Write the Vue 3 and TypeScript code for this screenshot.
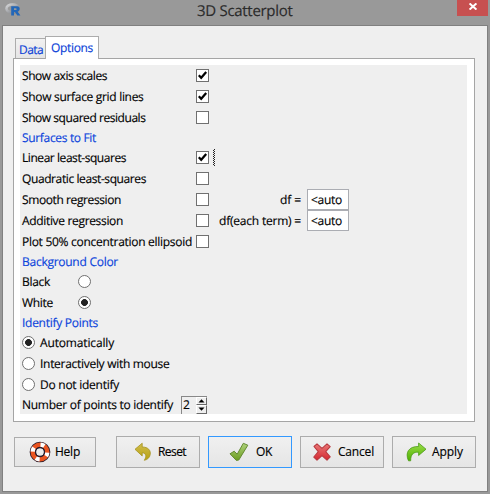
<script setup lang="ts">
interface CheckRow { label: string; width: number; on: boolean; focus?: boolean; df?: string; dfWidth?: number }
interface RadioRow { label: string; width: number; on: boolean }

const displayRows: CheckRow[] = [
  { label: 'Show axis scales', width: 85, on: true },
  { label: 'Show surface grid lines', width: 121.5, on: true },
  { label: 'Show squared residuals', width: 123.5, on: false },
]
const surfaceRows: CheckRow[] = [
  { label: 'Linear least-squares', width: 104, on: true, focus: true },
  { label: 'Quadratic least-squares', width: 124, on: false },
  { label: 'Smooth regression', width: 99, on: false, df: 'df =', dfWidth: 21 },
  { label: 'Additive regression', width: 101, on: false, df: 'df(each term) =', dfWidth: 82 },
  { label: 'Plot 50% concentration ellipsoid', width: 170, on: false },
]
const backgrounds: RadioRow[] = [
  { label: 'Black', width: 28, on: false },
  { label: 'White', width: 31, on: true },
]
const identify: RadioRow[] = [
  { label: 'Automatically', width: 74, on: true },
  { label: 'Interactively with mouse', width: 129.5, on: false },
  { label: 'Do not identify', width: 79, on: false },
]

// Spreads a label's letters so that it fills the given width in pixels.
const vFit = {
  mounted(el: HTMLElement, binding: { value: number }) {
    const count = (el.textContent ?? '').trim().length
    const natural = el.getBoundingClientRect().width
    el.style.letterSpacing = `${((binding.value - natural) / count).toFixed(3)}px`
  },
}
</script>

<template>
  <div class="window">
    <header class="titlebar">
      <svg class="rlogo" width="16" height="14" viewBox="0 0 16 14">
        <defs>
          <linearGradient id="ring" x1="0" y1="0" x2="1" y2="1">
            <stop offset="0" stop-color="#d5d6d8" /><stop offset="1" stop-color="#777a80" />
          </linearGradient>
        </defs>
        <ellipse cx="7.5" cy="5.5" rx="6" ry="4" fill="none" stroke="url(#ring)" stroke-width="2.6" />
        <path d="M6.2 3.2H12.2Q15 3.6 14.6 6.2Q14.3 8 12.6 8.4L15.4 12.6H12.3L10 9H9V12.6H6.2ZM9 5.2V7H11.2Q12.2 6.1 11.2 5.2Z" fill="#2367b8" fill-rule="evenodd" />
      </svg>
      <span v-fit="95.5" class="title">3D Scatterplot</span>
      <button class="close" aria-label="Close">
        <svg width="8" height="7" viewBox="0 0 8 7"><path d="M.6 .4L7.4 6.6M7.4 .4L.6 6.6" stroke="#fff" stroke-width="1.9" /></svg>
      </button>
    </header>
    <main class="client">
      <nav class="tabs">
        <div class="tab"><span v-fit="24">Data</span></div>
        <div class="tab active"><span v-fit="42">Options</span></div>
      </nav>
      <section class="panel">
        <div class="content">
          <div v-for="row in displayRows" :key="row.label" class="row">
            <span class="label"><span v-fit="row.width">{{ row.label }}</span></span>
            <span class="check"><svg v-if="row.on" width="11" height="11" viewBox="0 0 11 11"><path d="M1.8 5.2L4.2 7.8L9.2 2" fill="none" stroke="#000" stroke-width="2.2" /></svg></span>
          </div>
          <div class="row heading"><span v-fit="74">Surfaces to Fit</span></div>
          <div v-for="row in surfaceRows" :key="row.label" class="row">
            <span class="label"><span v-fit="row.width">{{ row.label }}</span></span>
            <span class="check"><svg v-if="row.on" width="11" height="11" viewBox="0 0 11 11"><path d="M1.8 5.2L4.2 7.8L9.2 2" fill="none" stroke="#000" stroke-width="2.2" /></svg></span>
            <span v-if="row.focus" class="focus"></span>
            <template v-if="row.df">
              <span class="df"><span v-fit="row.dfWidth">{{ row.df }}</span></span>
              <span class="entry"><span v-fit="31">&lt;auto</span></span>
            </template>
          </div>
          <div class="row heading"><span v-fit="96">Background Color</span></div>
          <div v-for="row in backgrounds" :key="row.label" class="row">
            <span class="label short"><span v-fit="row.width">{{ row.label }}</span></span>
            <span class="radio" :class="{ on: row.on }"></span>
          </div>
          <div class="row heading"><span v-fit="76">Identify Points</span></div>
          <div v-for="row in identify" :key="row.label" class="row">
            <span class="radio lead" :class="{ on: row.on }"></span>
            <span v-fit="row.width">{{ row.label }}</span>
          </div>
          <div class="row last">
            <span class="count"><span v-fit="151">Number of points to identify</span></span>
            <span class="spin">
              <span class="num">2</span>
              <span class="arrows">
                <i><svg width="7" height="4" viewBox="0 0 7 4"><path d="M.5 3.5L3.5 .2L6.5 3.5Z" /></svg></i>
                <i><svg width="7" height="4" viewBox="0 0 7 4"><path d="M.5 .5L3.5 3.8L6.5 .5Z" /></svg></i>
              </span>
            </span>
          </div>
        </div>
      </section>
      <footer class="buttons">
        <button class="btn help">
          <svg width="22" height="22" viewBox="0 0 24 24">
            <circle cx="12" cy="12" r="7.9" fill="none" stroke="#2a1d2c" stroke-width="6.8" />
            <circle cx="12" cy="12" r="7.9" fill="none" stroke="#ea5420" stroke-width="4.8" />
            <circle cx="12" cy="12" r="7.9" fill="none" stroke="#fff" stroke-width="4.8" stroke-dasharray="4.4 8.01" stroke-dashoffset="2.2" transform="rotate(18 12 12)" />
            <circle cx="12" cy="12" r="4.9" fill="none" stroke="#2a1d2c" stroke-width="1.4" />
          </svg>
          <span v-fit="25">Help</span>
        </button>
        <button class="btn reset">
          <svg width="18" height="20" viewBox="0 0 18 20">
            <defs><linearGradient id="gold" x1="0" y1="0" x2="0" y2="1"><stop offset="0" stop-color="#d1bd4d" /><stop offset="1" stop-color="#b6a00d" /></linearGradient></defs>
            <path d="M8.2 1.2V5C14 5 17 8.4 16.2 12.5C15.7 15.6 13.5 17.7 10.3 18.3C12.6 14.8 12.5 11.3 8.2 10.7V14L1 7.3Z" fill="url(#gold)" stroke="#a4921e" stroke-width=".8" />
          </svg>
          <span v-fit="28">Reset</span>
        </button>
        <button class="btn ok">
          <svg width="20" height="20" viewBox="0 0 20 20">
            <defs><linearGradient id="leaf" x1="0" y1="0" x2="0" y2="1"><stop offset="0" stop-color="#afd27c" /><stop offset="1" stop-color="#6c9d20" /></linearGradient></defs>
            <path d="M1 11.8L5.2 9.2L8.2 12.2L14.3 1.3L18.8 3.2L9.8 18L7.3 18.4Z" fill="url(#leaf)" stroke="#648a32" stroke-width="1" stroke-linejoin="round" />
          </svg>
          <span v-fit="16">OK</span>
        </button>
        <button class="btn cancel">
          <svg width="18" height="18" viewBox="0 0 18 18">
            <defs><linearGradient id="ruby" x1="0" y1="0" x2="0" y2="1"><stop offset="0" stop-color="#e97776" /><stop offset="1" stop-color="#d52830" /></linearGradient></defs>
            <path d="M1 3.5L4 .9L9 5.4L14 .9L17.2 3.7L12.7 8.7L17.2 13.8L14 17.2L9 12.7L4 17.2L.8 14L5.3 8.7Z" fill="url(#ruby)" stroke="#b93a40" stroke-width="1.1" stroke-linejoin="round" />
          </svg>
          <span v-fit="36">Cancel</span>
        </button>
        <button class="btn apply">
          <svg width="21" height="20" viewBox="0 0 21 20">
            <defs><linearGradient id="lime" x1="0" y1="0" x2="0" y2="1"><stop offset="0" stop-color="#9bdd4a" /><stop offset="1" stop-color="#4fb100" /></linearGradient></defs>
            <path d="M12.6 1L20 7.2L12.6 13.5V10.2C7.6 9.8 4.5 12.3 4.7 18.8H2.5C-1.3 10.5 3 4.2 12.6 4.5Z" fill="url(#lime)" stroke="#4b9a18" stroke-width=".8" stroke-linejoin="round" />
          </svg>
          <span v-fit="31">Apply</span>
        </button>
      </footer>
    </main>
  </div>
</template>

<style>
body { margin: 0; }
</style>

<style scoped>
* { box-sizing: border-box; }
.window {
  width: 490px;
  height: 494px;
  display: flex;
  flex-direction: column;
  background: #999;
  color: #000;
  font: 12px/16px "Open Sans", "Noto Sans", sans-serif;
  white-space: nowrap;
  overflow: hidden;
  text-rendering: geometricPrecision;
  -webkit-text-stroke: .15px;
}
.titlebar {
  height: 25px;
  display: grid;
  grid-template-columns: 197px 1fr 31px;
  padding-right: 2px;
  align-items: start;
  flex: none;
}
.rlogo { margin: 3px 0 0 5px; }
.title { justify-self: start; font-size: 15px; line-height: 20px; margin-top: 1px; color: #2b2b2b; }
.close {
  height: 16px;
  padding: 3px 0 0;
  border: 0;
  background: #c75050;
  display: flex;
  justify-content: center;
  align-items: flex-start;
}
.client {
  width: 486px;
  height: 467px;
  margin-left: 2px;
  border: 1px solid #808080;
  background: #efefef;
  padding: 10px 11px 0 10px;
}
.tabs { display: flex; align-items: flex-end; height: 22px; padding-left: 2px; }
.tab {
  width: 30px;
  height: 20px;
  border: 1px solid #acacac;
  border-width: 1px 0 0 1px;
  background: linear-gradient(#f1f1f1, #e5e5e5);
  color: #0b3fd8;
  padding: 3px 0 0 3px;
}
.active { width: 54px; height: 23px; margin-bottom: -1px; border-right-width: 1px; background: #fff; padding-left: 5px; position: relative; }
.panel { width: 462px; height: 364px; border: 1px solid #a5a5a5; background: #fff; padding: 6px; }
.content { width: 447px; height: 349px; background: #efefef; }
.row { display: flex; align-items: center; height: 21px; padding-left: 2px; }
.heading { height: 19px; color: #0b43dc; }
.label { width: 174px; flex: none; }
.short { width: 56px; }
.check { width: 13px; height: 13px; flex: none; border: 1px solid #707070; background: #fff; display: flex; }
.focus {
  width: 2px;
  height: 17px;
  margin-left: 4px;
  background: repeating-conic-gradient(#222 0 25%, #efefef 0 50%) 0 0 / 2px 2px;
}
.df { width: 92px; flex: none; display: flex; justify-content: flex-end; }
.entry { width: 42px; height: 21px; margin-left: 6px; border: 1px solid #abadb3; background: #fff; padding: 2px 0 0 3px; }
.radio { width: 13px; height: 13px; flex: none; border: 1px solid #707070; border-radius: 50%; background: #fff; }
.radio.on { background: radial-gradient(circle, #222 0 3.1px, #fff 3.7px); }
.lead { margin-right: 5px; }
.last { height: 19px; }
.count { width: 159px; flex: none; }
.spin { width: 26px; height: 18px; display: flex; justify-content: space-between; border: 1px solid #888; border-width: 1px 0 0 1px; }
.num { padding-left: 1px; }
.arrows { width: 11px; display: flex; flex-direction: column; }
.arrows i { height: 8px; display: flex; align-items: center; justify-content: center; border: 1px solid; border-color: #fff #696969 #696969 #fff; }
.arrows i + i { height: 9px; }
.arrows svg { flex: none; }
.buttons { display: flex; align-items: center; height: 32px; margin-top: 14px; padding-left: 1px; }
.btn {
  width: 84px;
  height: 32px;
  flex: none;
  display: flex;
  align-items: center;
  margin: 0 8px 0 0;
  padding: 0;
  border: 1px solid #acacac;
  background: linear-gradient(#f0f0f0, #e5e5e5);
  color: #000;
  font: inherit;
  text-align: left;
}
.btn svg, .btn span { flex: none; }
.help { width: 82px; height: 30px; margin-right: 20px; padding-left: 14px; }
.help svg { margin-right: 4px; }
.reset { padding-left: 17px; }
.reset svg { margin-right: 6px; }
.ok { padding-left: 20px; border-color: #3399ff; }
.ok svg { margin-right: 7px; }
.cancel { padding-left: 12px; }
.cancel svg { margin-right: 7px; }
.apply { padding-left: 13px; }
.apply svg { margin-right: 5px; }
</style>
